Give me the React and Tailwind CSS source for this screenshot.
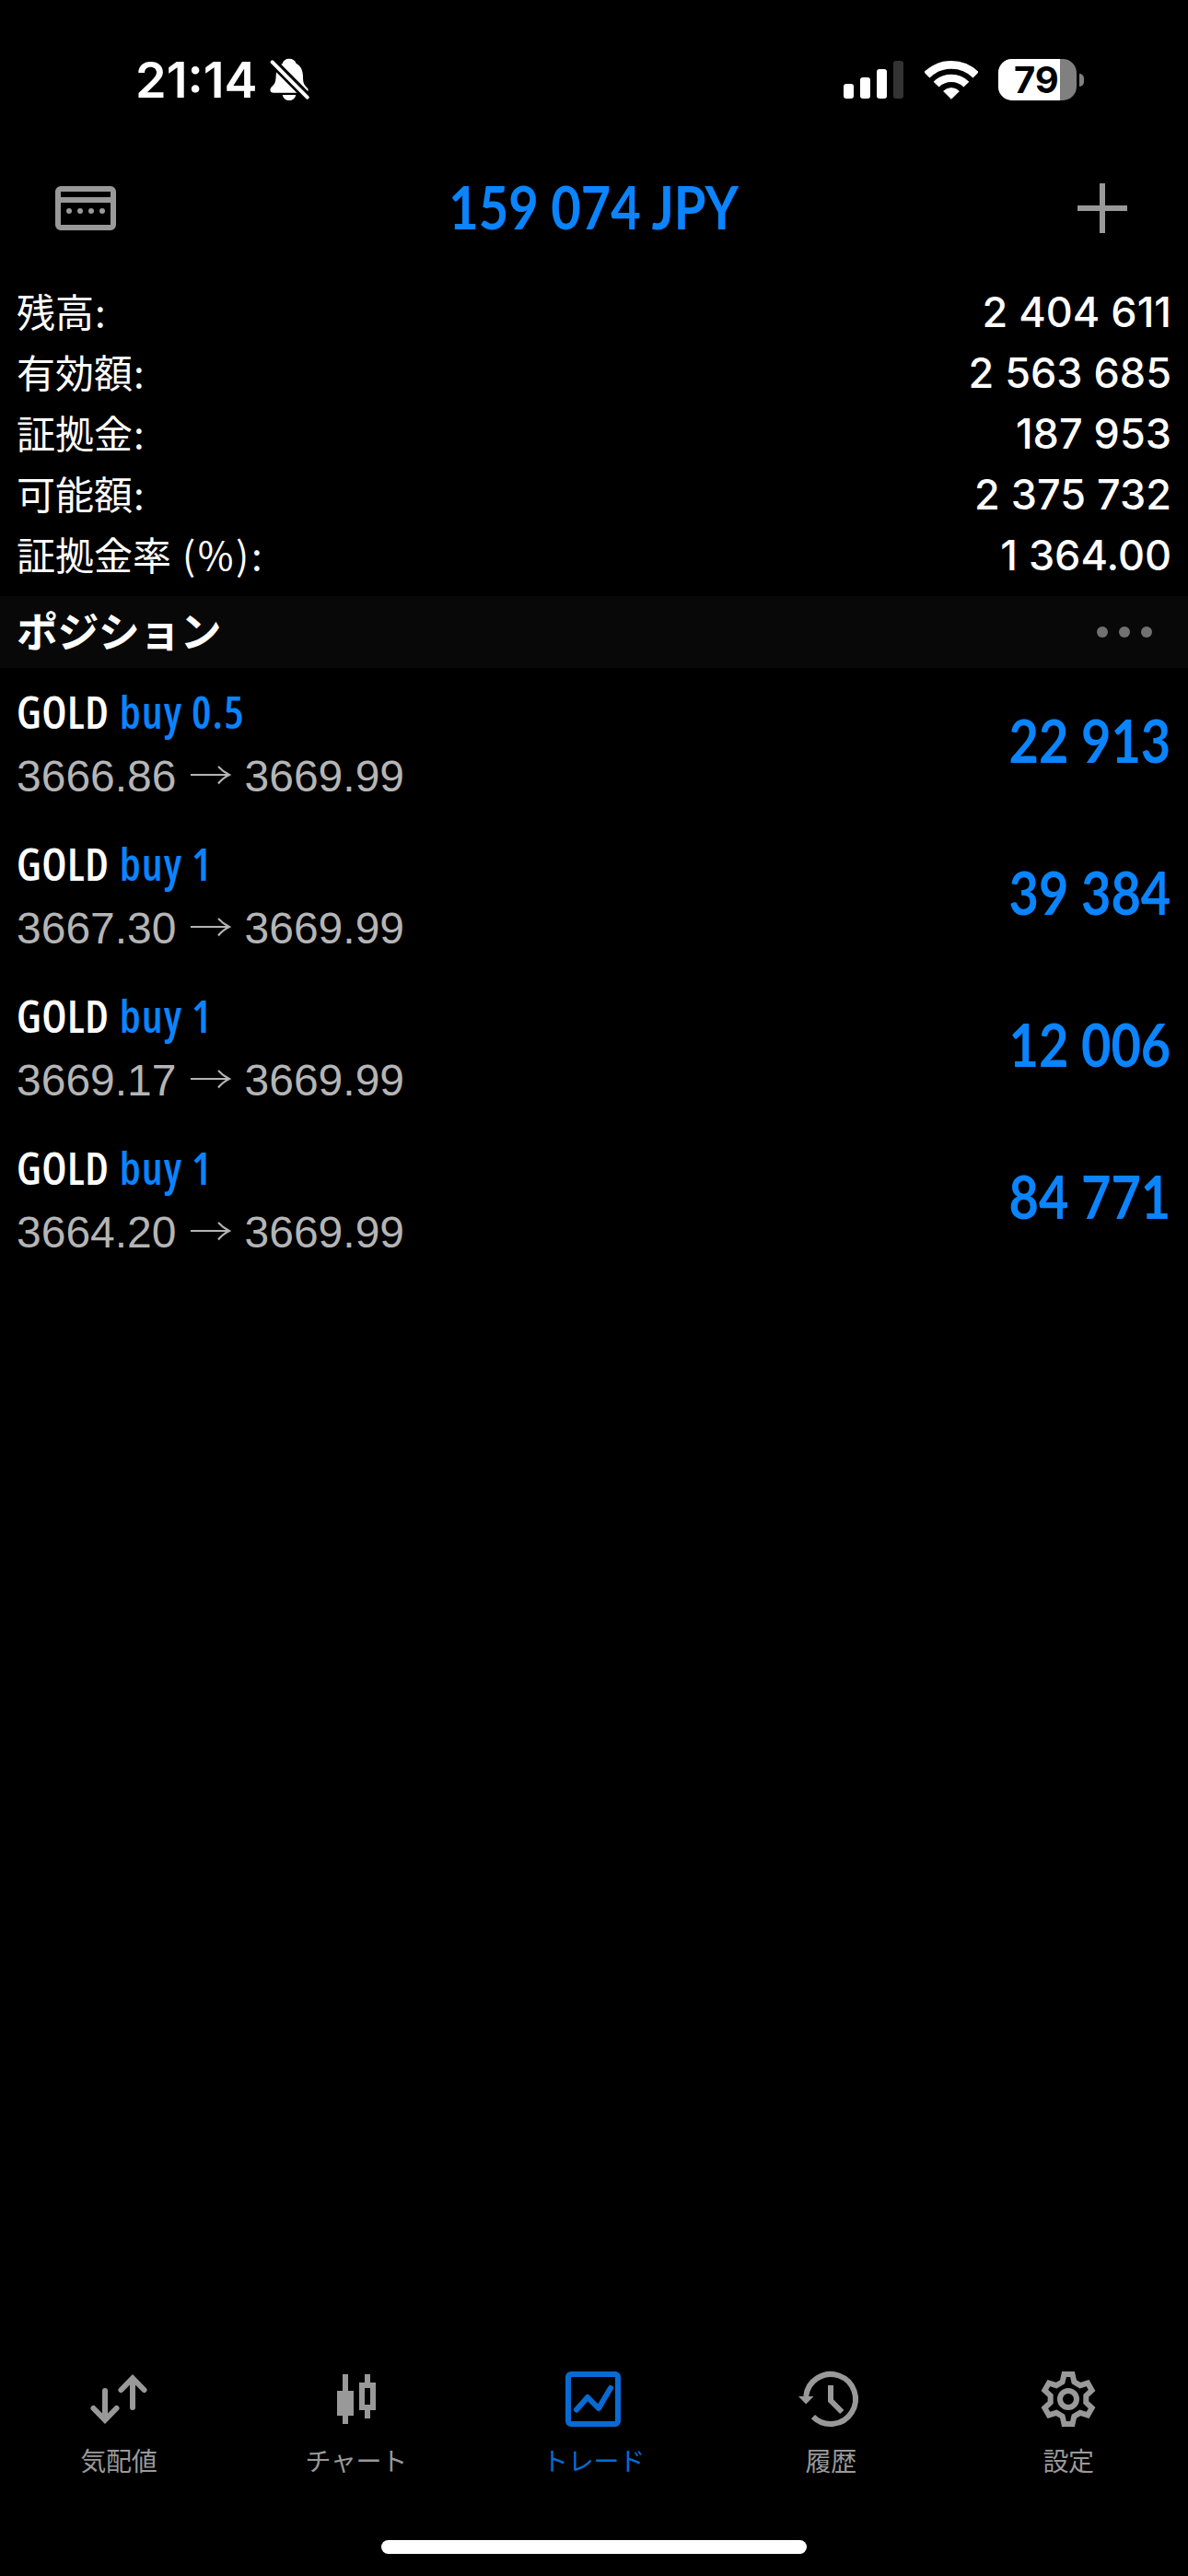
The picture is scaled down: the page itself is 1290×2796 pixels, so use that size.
import React from "react";

const SUMMARY = [
  { label: "残高", value: "2 404 611" },
  { label: "有効額", value: "2 563 685" },
  { label: "証拠金", value: "187 953" },
  { label: "可能額", value: "2 375 732" },
  { label: "証拠金率", suffix: " (%)", value: "1 364.00" },
];

const POSITIONS = [
  { symbol: "GOLD", side: "buy 0.5", open: "3666.86", current: "3669.99", profit: "22 913" },
  { symbol: "GOLD", side: "buy 1", open: "3667.30", current: "3669.99", profit: "39 384" },
  { symbol: "GOLD", side: "buy 1", open: "3669.17", current: "3669.99", profit: "12 006" },
  { symbol: "GOLD", side: "buy 1", open: "3664.20", current: "3669.99", profit: "84 771" },
];

function BellOff() {
  return (
    <svg className="ml-[13px] h-[47px] w-[44px]" viewBox="517 74 132 141">
      <mask id="bell-slash">
        <rect x="517" y="74" width="132" height="141" fill="#fff" />
        <path d="M505 66L660 222" stroke="#000" strokeWidth="29" />
      </mask>
      <g fill="#fff" mask="url(#bell-slash)">
        <path d="M580 76c12 0 20 6 23 16c15 7 21 22 22 42c0 22 4 27 12 35c9 8 5 18-7 18H530c-13 0-15-11-7-19c9-9 13-13 14-34c1-20 6-35 21-42c3-10 10-16 22-16z" />
      </g>
      <path d="M558 194h44c-3 12-11 18-22 18s-19-6-22-18z" fill="#fff" />
      <path d="M525 87L639 202" stroke="#fff" strokeWidth="12" strokeLinecap="round" />
    </svg>
  );
}

function Wifi() {
  return (
    <svg className="ml-[23px] h-[42px] w-[58px]" viewBox="341 75 174 126" fill="none" stroke="#fff">
      <path d="M348.1 121.1A113 113 0 0 1 507.9 121.1" strokeWidth="26" />
      <path d="M378.9 151.9A69.5 69.5 0 0 1 477.1 151.9" strokeWidth="25" />
      <path d="M403 174A36 36 0 0 1 453 174L428 199z" fill="#fff" strokeWidth="3" strokeLinejoin="round" />
    </svg>
  );
}

function StatusBar() {
  return (
    <div className="flex h-[173px] items-center justify-between pr-[113px] pl-[147px]">
      <div className="flex items-center">
        <span className="text-[54px] leading-[60px] font-semibold">21:14</span>
        <BellOff />
      </div>
      <div className="flex items-center">
        <div className="flex h-[41px] items-end gap-[7px]">
          <div className="h-[16px] w-[11px] rounded-[3px] bg-white" />
          <div className="h-[23px] w-[11px] rounded-[3px] bg-white" />
          <div className="h-[32px] w-[11px] rounded-[3px] bg-white" />
          <div className="h-[41px] w-[11px] rounded-[3px] bg-[#333333]" />
        </div>
        <Wifi />
        <div className="ml-[22px] flex h-[45px] w-[85px] rounded-[15px] bg-[#808080]">
          <div className="flex w-[67px] items-center rounded-l-[15px] bg-white pl-[17px]">
            <span className="text-[40px] leading-[50px] font-bold text-black">79</span>
          </div>
        </div>
        <div className="ml-[3px] h-[14px] w-[5px] rounded-r-full bg-[#808080]" />
      </div>
    </div>
  );
}

function NavBar() {
  return (
    <div className="grid h-[106px] grid-cols-3 items-center pr-[66px] pl-[60px]">
      <svg className="h-[48px] w-[66px]" viewBox="0 0 66 48" fill="#999">
        <rect x="3" y="3" width="60" height="42" rx="3" fill="none" stroke="#999" strokeWidth="6" />
        <rect x="3" y="12" width="60" height="6" />
        <circle cx="15" cy="27" r="3" />
        <circle cx="27" cy="27" r="3" />
        <circle cx="39" cy="27" r="3" />
        <circle cx="51" cy="27" r="3" />
      </svg>
      <div className="flex justify-center pb-1 pl-[6px]">
        <h1 className="shrink-0 scale-x-[0.862] whitespace-nowrap font-[Lato] text-[65px] leading-[78px] font-bold text-[#0a84ff]">
          159 074 JPY
        </h1>
      </div>
      <svg className="h-[54px] w-[54px] justify-self-end" viewBox="0 0 54 54" fill="#999">
        <rect x="24" width="6" height="54" />
        <rect y="24" width="54" height="6" />
      </svg>
    </div>
  );
}

function Summary() {
  return (
    <div className="flex flex-col px-[18px] pt-[25px] pb-[13px]">
      {SUMMARY.map((row) => (
        <div key={row.label} className="flex h-[66px] items-baseline justify-between leading-[66px]">
          <span className="whitespace-pre font-['Noto_Sans_CJK_JP',sans-serif] text-[42px]">
            {row.label}
            {row.suffix ? <span className="tracking-[2.6px]">{row.suffix}:</span> : <span className="ml-px">:</span>}
          </span>
          <span className="text-[45px] font-medium">{row.value}</span>
        </div>
      ))}
    </div>
  );
}

function Position({ symbol, side, open, current, profit }) {
  return (
    <div className="flex h-[165px] items-center justify-between pr-[19px] pl-[18px]">
      <div className="flex flex-col gap-1">
        <div className="font-['Open_Sans'] text-[48px] leading-[66px] font-semibold tracking-[0.5px] font-stretch-[79%]">
          {symbol} <span className="ml-[2px] tracking-[1.1px] text-[#0a84ff]">{side}</span>
        </div>
        <div className="flex items-center gap-[13px] font-['Liberation_Sans'] text-[48px] leading-[66px] text-[#b5b5b5]">
          <span>{open}</span>
          <svg className="mb-[3px] h-[22px] w-[48px]" viewBox="0 0 48 22" fill="none" stroke="#b5b5b5" strokeWidth="2">
            <path d="M2 11H44" />
            <path d="M32 2Q37.500 8 44 11Q37.500 14 32 20.500" />
          </svg>
          <span>{current}</span>
        </div>
      </div>
      <div className="origin-right scale-x-[0.86] pb-[9px] font-[Lato] text-[65px] leading-[78px] font-bold text-[#0a84ff]">
        {profit}
      </div>
    </div>
  );
}

const gearTooth = (deg) => {
  const a = (deg * Math.PI) / 180;
  return [[-6.4, -18.6], [-4.5, -27], [4.5, -27], [6.4, -18.6]]
    .map(([x, y]) => `${(36 + x * Math.cos(a) - y * Math.sin(a)).toFixed(2)},${(36 + x * Math.sin(a) + y * Math.cos(a)).toFixed(2)}`)
    .join(" ");
};
const GEAR = [0, 60, 120, 180, 240, 300].map(gearTooth).join(" ");

const TABS = [
  {
    label: "気配値",
    icon: (
      <g strokeLinecap="round">
        <path d="M21 27V58M8.500 46L21 58.800L33.500 46" />
        <path d="M51 45V14M38.500 26L51 13.200L63.500 26" />
      </g>
    ),
  },
  {
    label: "チャート",
    icon: (
      <g>
        <path d="M24 9V63M48 9V21M48 45V57" />
        <rect x="18" y="30" width="12" height="21" fill="currentColor" />
        <rect x="42" y="21" width="12" height="24" />
      </g>
    ),
  },
  {
    label: "トレード",
    active: true,
    icon: (
      <g>
        <rect x="9" y="9" width="54" height="54" rx="3" />
        <path d="M18 47.500L30 34L42 46L55 24" strokeLinecap="round" strokeLinejoin="round" />
      </g>
    ),
  },
  {
    label: "履歴",
    icon: (
      <g>
        <path d="M9.170 33A27 27 0 1 1 16.900 55.100" />
        <path d="M36 21V37.500L48.300 50" />
        <path d="M1 33H17.500L9.200 41.500z" fill="currentColor" stroke="none" />
      </g>
    ),
  },
  {
    label: "設定",
    icon: (
      <g>
        <polygon points={GEAR} />
        <circle cx="36" cy="36" r="9" />
      </g>
    ),
  },
];

function TabBar() {
  return (
    <nav className="grid grid-cols-5 pr-px">
      {TABS.map((tab) => (
        <div
          key={tab.label}
          className={tab.active ? "flex flex-col items-center text-[#086bd3]" : "flex flex-col items-center text-[#999999]"}
        >
          <svg className="h-[72px] w-[72px]" viewBox="0 0 72 72" fill="none" stroke="currentColor" strokeWidth="6">
            {tab.icon}
          </svg>
          <span className="mt-[10px] font-['Noto_Sans_CJK_JP',sans-serif] text-[28px] leading-[40px] tracking-[-0.3px]">
            {tab.label}
          </span>
        </div>
      ))}
    </nav>
  );
}

export default function App() {
  return (
    <div className="flex h-[2796px] w-[1290px] flex-col overflow-hidden bg-black font-[Inter,sans-serif] text-white">
      <StatusBar />
      <NavBar />
      <Summary />
      <div className="flex h-[78px] items-center justify-between bg-[#080808] pr-[39px] pl-[18px]">
        <h2 className="pb-[5px] font-['Noto_Sans_CJK_JP',sans-serif] text-[45px] leading-[66px] font-bold tracking-[-0.6px]">
          ポジション
        </h2>
        <div className="flex gap-3">
          <div className="size-3 rounded-full bg-[#717171]" />
          <div className="size-3 rounded-full bg-[#717171]" />
          <div className="size-3 rounded-full bg-[#717171]" />
        </div>
      </div>
      <div className="flex-1">
        {POSITIONS.map((p) => (
          <Position key={p.open} {...p} />
        ))}
      </div>
      <TabBar />
      <div className="flex h-[106px] items-end justify-center pb-[24px]">
        <div className="h-[15px] w-[462px] rounded-full bg-white" />
      </div>
    </div>
  );
}
